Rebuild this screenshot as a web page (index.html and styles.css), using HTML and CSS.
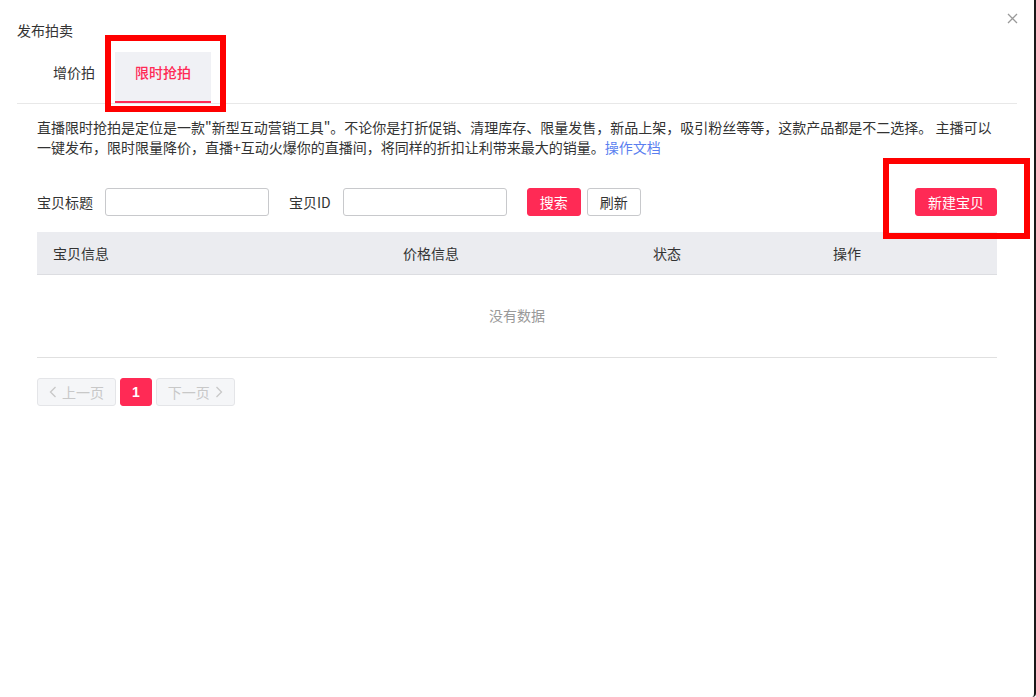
FILE: index.html
```html
<!DOCTYPE html>
<html lang="zh-CN">
<head>
    <meta charset="UTF-8">
    <meta name="viewport" content="width=device-width, initial-scale=1.0">
    <title>发布拍卖</title>
    <link rel="stylesheet" href="styles.css">
</head>
<body>

    <div class="dialog">
        <div class="dialog-head">
            <span class="dialog-title">发布拍卖</span>
            <button class="close-btn" aria-label="关闭">
                <svg width="11" height="11" viewBox="0 0 11 11"><path d="M1 1L10 10M10 1L1 10" stroke="#999" stroke-width="1.3" fill="none"/></svg>
            </button>
        </div>

        <div class="tabs">
            <div class="tab">增价拍</div>
            <div class="tab active">限时抢拍</div>
        </div>

        <div class="dialog-body">
            <p class="intro">直播限时抢拍是定位是一款"新型互动营销工具"。不论你是打折促销、清理库存、限量发售，新品上架，吸引粉丝等等，这款产品都是不二选择。 主播可以一键发布，限时限量降价，直播+互动火爆你的直播间，将同样的折扣让利带来最大的销量。<a href="#" class="doc-link">操作文档</a></p>

            <div class="toolbar">
                <label class="field-label">宝贝标题</label>
                <input class="field-input" type="text">
                <label class="field-label">宝贝ID</label>
                <input class="field-input" type="text">
                <button class="btn btn-primary btn-search">搜索</button>
                <button class="btn btn-default">刷新</button>
                <button class="btn btn-primary btn-create">新建宝贝</button>
            </div>

            <table class="goods-table">
                <thead>
                    <tr>
                        <th class="col-info">宝贝信息</th>
                        <th class="col-price">价格信息</th>
                        <th class="col-status">状态</th>
                        <th class="col-action">操作</th>
                    </tr>
                </thead>
                <tbody>
                    <tr>
                        <td class="empty" colspan="4">没有数据</td>
                    </tr>
                </tbody>
            </table>

            <div class="pager">
                <button class="page-btn" disabled>
                    <svg width="8" height="12" viewBox="0 0 8 12"><path d="M6.5 1L1.5 6L6.5 11" stroke="#c8c8c8" stroke-width="1.3" fill="none"/></svg>
                    上一页
                </button>
                <button class="page-btn current">1</button>
                <button class="page-btn" disabled>
                    下一页
                    <svg width="8" height="12" viewBox="0 0 8 12"><path d="M1.5 1L6.5 6L1.5 11" stroke="#c8c8c8" stroke-width="1.3" fill="none"/></svg>
                </button>
            </div>
        </div>

        <div class="mark mark-tab"></div>
        <div class="mark mark-create"></div>
    </div>

</body>
</html>
```

FILE: styles.css
```css
* {
    box-sizing: border-box;
}
body {
    margin: 0;
    background: #fff;
    font-family: "Noto Sans CJK SC", "Liberation Sans", sans-serif;
    font-size: 14px;
    color: #333;
}
.dialog {
    position: relative;
    width: 1036px;
    height: 697px;
    background: #fff;
    border-right: 2px solid #1a1a1a;
    border-bottom-right-radius: 4px;
}
.dialog-head {
    display: flex;
    justify-content: space-between;
    align-items: flex-start;
    padding: 0 17px;
    height: 52px;
}
.dialog-title {
    line-height: 20px;
    margin-top: 20px;
}
.close-btn {
    border: none;
    background: none;
    padding: 0;
    margin-top: 13px;
    margin-right: -1px;
    cursor: pointer;
    line-height: 0;
}
.tabs {
    display: flex;
    margin: 0 17px;
    padding-left: 16px;
    border-bottom: 1px solid #e8e8e8;
}
.tab {
    height: 51px;
    line-height: 40px;
    padding: 0 20px;
    border-bottom: 2px solid transparent;
    cursor: pointer;
}
.tab.active {
    background: #f0f1f5;
    color: #ff2a55;
    font-weight: 500;
    border-bottom-color: #ff2a55;
}
.dialog-body {
    padding: 0 37px;
}
.intro {
    margin: 14px 0 0 0;
    line-height: 19.5px;
}
.doc-link {
    color: #5b7ff0;
    text-decoration: none;
}
.toolbar {
    display: flex;
    align-items: center;
    margin-top: 31px;
}
.field-label {
    margin-right: 12px;
}
.field-input {
    width: 164px;
    height: 28px;
    border: 1px solid #c8c9cc;
    border-radius: 3px;
    margin-right: 20px;
    padding: 0 8px;
    font-size: 14px;
}
.btn {
    height: 28px;
    padding: 0 12px;
    font-family: inherit;
    font-size: 14px;
    border-radius: 3px;
    cursor: pointer;
}
.btn-primary {
    background: #ff2a55;
    border: 1px solid #ff2a55;
    color: #fff;
}
.btn-default {
    background: #fff;
    border: 1px solid #c8c9cc;
    color: #333;
}
.btn-search {
    margin-right: 6px;
}
.btn-create {
    margin-left: auto;
}
.goods-table {
    width: 100%;
    margin-top: 16px;
    border-collapse: collapse;
    table-layout: fixed;
}
.goods-table th {
    height: 42px;
    background: #ebecf0;
    border-bottom: 1px solid #dcdde1;
    text-align: left;
    font-weight: normal;
    padding: 0 16px;
}
.col-info {
    width: 350px;
}
.col-price {
    width: 250px;
}
.col-status {
    width: 180px;
}
.goods-table td.empty {
    height: 83px;
    text-align: center;
    color: #999;
    border-bottom: 1px solid #e0e0e0;
    padding-top: 0;
}
.pager {
    display: flex;
    gap: 4px;
    margin-top: 20px;
}
.page-btn {
    display: flex;
    align-items: center;
    gap: 5px;
    height: 28px;
    padding: 0 11px;
    background: #f5f6f8;
    border: 1px solid #e4e5e8;
    border-radius: 3px;
    color: #c8c8c8;
    font-family: inherit;
    font-size: 14px;
}
.page-btn.current {
    background: #ff2a55;
    border-color: #ff2a55;
    color: #fff;
    padding: 0 11px;
    font-family: "Liberation Sans", sans-serif;
    font-weight: bold;
}
.mark {
    position: absolute;
    border: 6px solid #ff0000;
    pointer-events: none;
}
.mark-tab {
    left: 105px;
    top: 35px;
    width: 121px;
    height: 77px;
}
.mark-create {
    left: 883px;
    top: 158px;
    width: 147px;
    height: 81px;
}
```
